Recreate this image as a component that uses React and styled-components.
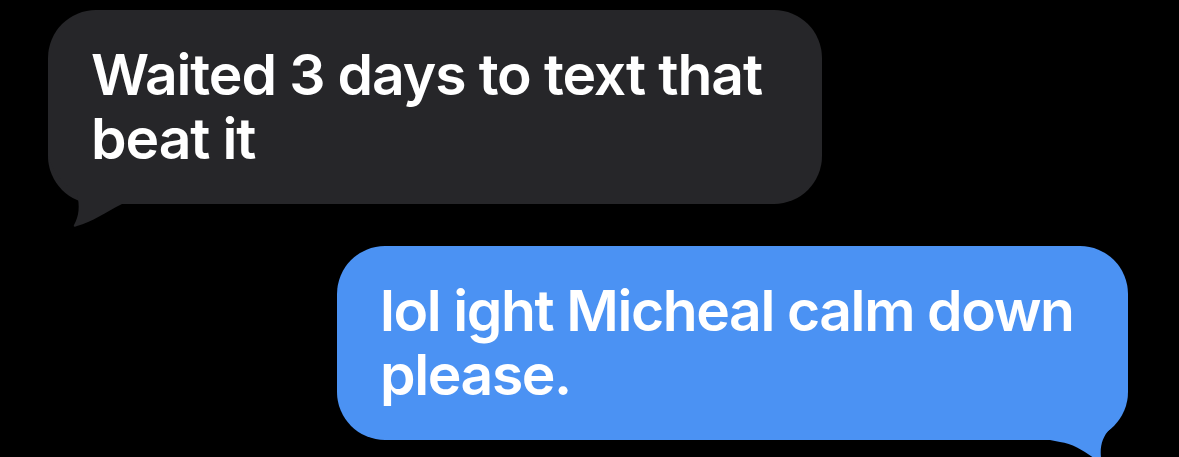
import React from 'react';
import styled, { createGlobalStyle } from 'styled-components';

const GlobalStyle = createGlobalStyle`
  html, body {
    margin: 0;
    padding: 0;
    background: #000;
    overflow: hidden;
  }
`;

const Thread = styled.div`
  display: flex;
  flex-direction: column;
  gap: 42px;
  padding-top: 10px;
  width: 1179px;
  height: 457px;
  box-sizing: border-box;
  font-family: Inter, 'Noto Sans', sans-serif;
`;

const Bubble = styled.div`
  position: relative;
  box-sizing: border-box;
  width: ${props => props.width}px;
  margin-left: ${props => props.offset}px;
  padding: 33px 43px 33px;
  border-radius: 48px;
  background: ${props => props.outgoing ? '#4b92f3' : '#262629'};
  color: #fff;
  font-size: 57px;
  font-weight: 600;
  line-height: 64px;
  letter-spacing: ${props => props.outgoing ? '-1.4px' : '-1.1px'};
  white-space: nowrap;
`;

const Text = styled.div`
  position: relative;
  z-index: 1;
`;

const Tail = styled.svg`
  position: absolute;
  z-index: 0;
  width: 100px;
  overflow: visible;
  ${props => props.outgoing
    ? 'right: -22px; bottom: -32px; height: 100px;'
    : 'left: -8px; bottom: -26px; height: 80px;'}
  path {
    fill: ${props => props.outgoing ? '#4b92f3' : '#262629'};
  }
`;

const IncomingTail = () => (
  <Tail viewBox="0 0 100 80">
    <path d="M8 0 C9 20 24 34 37 44 C40 56 39 66 34 75 C33 77 35 77 37 76 C52 72 66 62 82 54 L100 54 L100 0 Z" />
  </Tail>
);

const OutgoingTail = () => (
  <Tail outgoing viewBox="0 0 100 100">
    <path d="M78 0 C78 28 74 44 60 57 C51 66 49 78 52 92 C41 84 26 72 10 70 L0 68 L0 0 Z" />
  </Tail>
);

export default function App() {
  return (
    <>
      <GlobalStyle />
      <Thread>
        <Bubble width={774} offset={48}>
          <IncomingTail />
          <Text>Waited 3 days to text that<br />beat it</Text>
        </Bubble>
        <Bubble outgoing width={791} offset={337}>
          <OutgoingTail />
          <Text>lol ight Micheal calm down<br />please.</Text>
        </Bubble>
      </Thread>
    </>
  );
}
